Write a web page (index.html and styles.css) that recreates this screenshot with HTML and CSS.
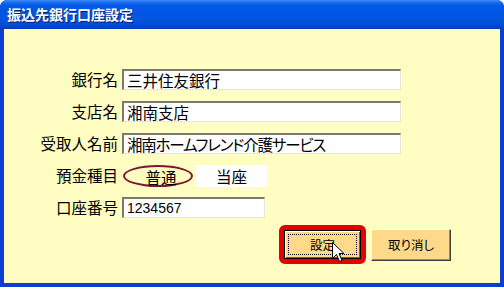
FILE: index.html
```html
<!DOCTYPE html>
<html>
<head>
<meta charset="utf-8">
<title>振込先銀行口座設定</title>
<link rel="stylesheet" href="styles.css">
</head>
<body>
<div class="window">
  <div class="titlebar">振込先銀行口座設定</div>
  <div class="client">
    <div class="form">
      <label class="lbl">銀行名</label>
      <div class="field wide">三井住友銀行</div>
      <label class="lbl">支店名</label>
      <div class="field wide">湘南支店</div>
      <label class="lbl">受取人名前</label>
      <div class="field wide tight">湘南ホームフレンド介護サービス</div>
      <label class="lbl">預金種目</label>
      <div class="options">
        <span class="opt picked">普通</span>
        <span class="opt plain">当座</span>
      </div>
      <label class="lbl">口座番号</label>
      <div class="field short num">1234567</div>
    </div>
    <div class="actions">
      <div class="ring"><button class="btn focus"><span>設定</span></button></div>
      <button class="btn">取り消し</button>
    </div>
    <svg class="cursor" width="13" height="21" viewBox="0 0 13 21">
      <path d="M0.5 0.5 L0.5 16.5 L4.5 12.5 L7.5 19.5 L10 18.5 L7 11.5 L12 11.5 Z" fill="#fff" stroke="#000" stroke-width="1"/>
    </svg>
  </div>
</div>
</body>
</html>
```

FILE: styles.css
```css
* {
  box-sizing: border-box;
}
body {
  margin: 0;
  background: #fff;
  font-family: "Noto Sans CJK JP", sans-serif;
}
.window {
  width: 504px;
  height: 287px;
  display: flex;
  flex-direction: column;
  background: #0a3fd0;
  border-radius: 7px 7px 0 0;
  overflow: hidden;
}
.titlebar {
  height: 29px;
  flex: none;
  padding: 0 0 2px 7px;
  display: flex;
  align-items: center;
  color: #fff;
  font-size: 14px;
  font-weight: bold;
  text-shadow: 1px 1px 0 #0a1e78;
  background: linear-gradient(#3d8ef6 0, #1466ec 3px, #0058e6 6px, #0054e0 20px, #0048d0 26px, #0a3ab8 29px);
}
.client {
  flex: 1;
  margin: 0 4px 4px 4px;
  background: #fffdc2;
  position: relative;
}
.form {
  display: grid;
  grid-template-columns: 114px auto;
  grid-auto-rows: 21px;
  column-gap: 4px;
  row-gap: 11px;
  margin-top: 40px;
}
.lbl {
  font-size: 15.5px;
  text-align: right;
  line-height: 21px;
  white-space: nowrap;
}
.field {
  height: 21px;
  background: #fff;
  border-top: 2px solid #7d7966;
  border-left: 2px solid #7d7966;
  border-right: 1px solid #e8e6d6;
  border-bottom: 1px solid #e8e6d6;
  padding-left: 3px;
  font-size: 15.5px;
  line-height: 18px;
  white-space: nowrap;
  overflow: hidden;
  font-feature-settings: "palt";
}
.wide {
  width: 279px;
}
.tight {
  letter-spacing: -1.2px;
}
.short {
  width: 143px;
}
.num {
  font-family: "Liberation Sans", sans-serif;
  font-size: 14px;
}
.options {
  display: flex;
  gap: 3px;
  height: 22px;
}
.opt {
  font-size: 15.5px;
  line-height: 20px;
  text-align: center;
}
.picked {
  width: 70px;
  margin-left: 1px;
  padding-left: 6px;
  border: 2px solid #7b1732;
  border-radius: 50%;
}
.plain {
  width: 71px;
  background: #fff;
  line-height: 22px;
}
.actions {
  display: flex;
  justify-content: flex-end;
  align-items: center;
  gap: 5px;
  margin-top: 7px;
  padding-right: 49px;
}
.ring {
  border: 5px solid #e40000;
  border-radius: 6px;
}
.btn {
  width: 80px;
  height: 32px;
  background: #ffd98a;
  border: 1px solid;
  border-color: #fff #404040 #404040 #fff;
  box-shadow: inset -1px -1px 0 #a08850;
  font-family: "Noto Sans CJK JP", sans-serif;
  font-size: 12.5px;
  color: #000;
  padding: 0;
  font-feature-settings: "palt";
}
.focus {
  width: 77px;
  height: 29px;
  display: flex;
  align-items: stretch;
  padding: 3px;
  border-color: #000;
  box-shadow: inset 1px 1px 0 #fff, inset -1px -1px 0 #806030;
}
.focus span {
  flex: 1;
  border: 1px dotted #000;
  display: flex;
  align-items: center;
  justify-content: center;
}
.cursor {
  position: absolute;
  left: 328px;
  top: 213px;
}
```
